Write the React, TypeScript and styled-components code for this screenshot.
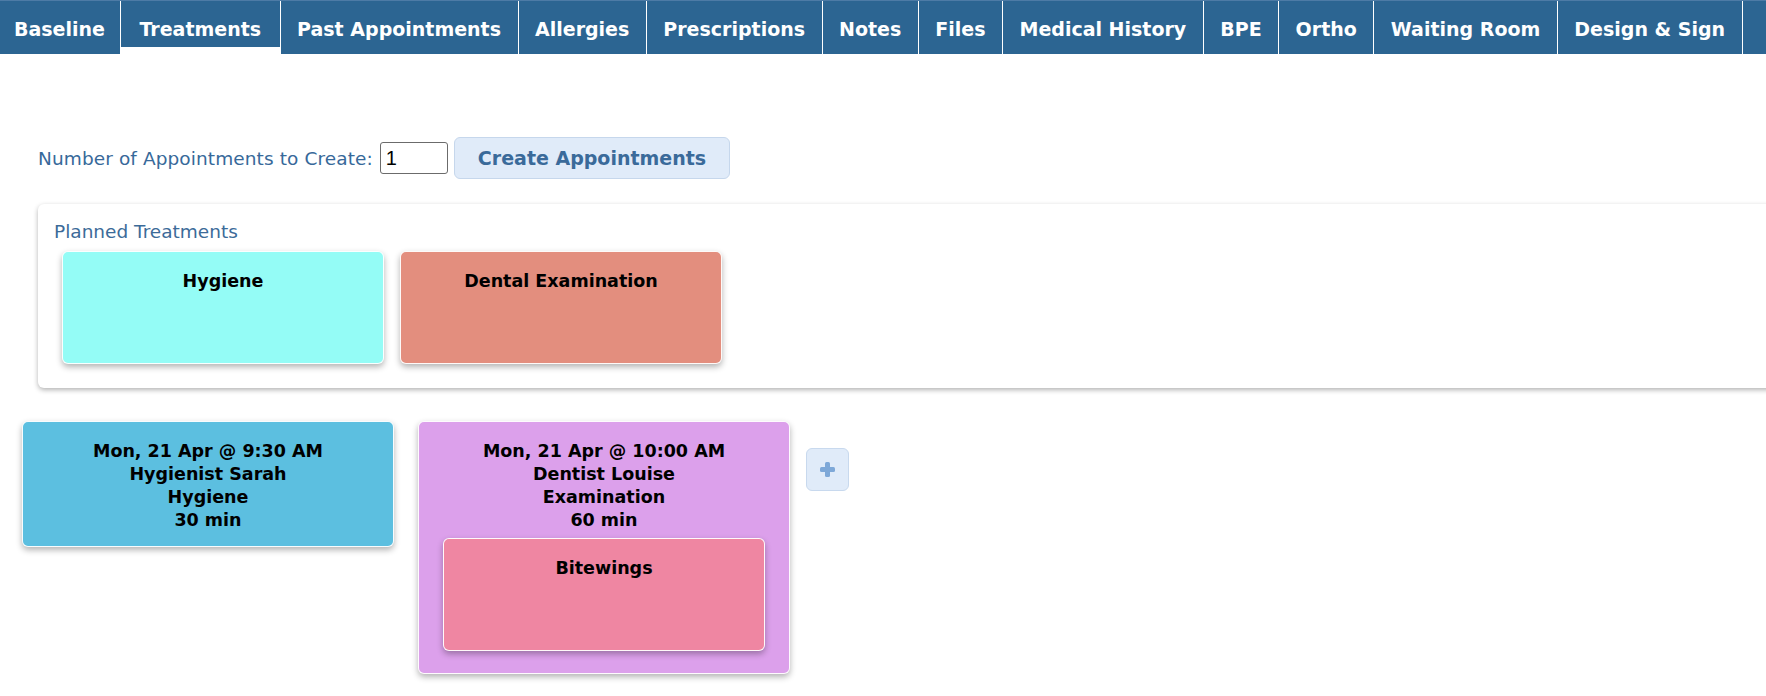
import { useState, ChangeEvent } from "react";
import styled, { createGlobalStyle, css } from "styled-components";

const GlobalStyle = createGlobalStyle`
  html, body {
    margin: 0;
    padding: 0;
    overflow: hidden;
    background: #fff;
  }

  body {
    font-family: "DejaVu Sans", "Liberation Sans", sans-serif;
  }
`;

const mixinCard = css`
  box-sizing: border-box;
  border: 1px solid rgba(255, 255, 255, 0.95);
  border-radius: 6px;
  box-shadow: 0 3px 6px rgba(0, 0, 0, 0.3);

  color: #000;
  font-size: 17.5px;
  font-weight: 700;
  line-height: 23px;
  text-align: center;
`;

const Nav = styled.nav`
  display: flex;
  height: 54px;
  box-sizing: border-box;

  background-color: #2c6592;
  border-top: 1px solid #4d7ba6;
`;

const Tab = styled.button<{ $active?: boolean }>`
  display: flex;
  align-items: center;
  box-sizing: border-box;
  height: 100%;
  padding: 3px 16.5px 0;

  color: #fff;
  font-family: inherit;
  font-size: 19px;
  font-weight: 700;
  line-height: 22px;
  white-space: nowrap;

  background: none;
  border: none;
  border-right: 1px solid #fff;
  cursor: pointer;

  &:first-child {
    padding: 3px 15px 0 14px;
  }

  ${({ $active }) =>
    $active &&
    css`
      padding: 3px 18.5px 0;
      box-shadow: inset 0 -7px 0 #fff;
    `}
`;

const Main = styled.main`
  padding: 83px 0 40px 38px;
`;

const Toolbar = styled.div`
  display: flex;
  align-items: center;
  gap: 6px;

  color: #37699a;
  font-size: 18.5px;
  letter-spacing: 0.1px;

  label {
    margin-right: 1px;
  }
`;

const CountInput = styled.input`
  box-sizing: border-box;
  width: 68px;
  height: 32px;
  padding: 0 5px;

  color: #000;
  font-family: "Liberation Sans", Arial, sans-serif;
  font-size: 20px;

  border: 1px solid #6b6b6b;
  border-radius: 3px;
  outline: none;
`;

const CreateButton = styled.button`
  box-sizing: border-box;
  height: 42px;
  padding: 0 23px;

  color: #3a6a9a;
  font-family: inherit;
  font-size: 19px;
  font-weight: 700;

  background-color: #e0ebf9;
  border: 1px solid #c6d7ec;
  border-radius: 6px;
  cursor: pointer;
`;

const Panel = styled.section`
  box-sizing: border-box;
  margin: 25px -60px 0 0;
  padding: 16px;

  background-color: #fff;
  border-radius: 6px;
  box-shadow: 0 2px 5px rgba(0, 0, 0, 0.3);
`;

const PanelTitle = styled.div`
  color: #3c6b99;
  font-size: 18.5px;
  line-height: 23px;
`;

const CardRow = styled.div`
  display: flex;
  flex-wrap: wrap;
`;

const TreatmentCard = styled.div<{ $color: string }>`
  ${mixinCard}

  width: 322px;
  height: 113px;
  margin: 8px;
  padding: 18px 16px 16px;

  background-color: ${({ $color }) => $color};
`;

const AppointmentRow = styled.div`
  display: flex;
  align-items: flex-start;
  gap: 24px;

  margin: 33px 0 0 -16px;
`;

const AppointmentCard = styled.div<{ $color: string }>`
  ${mixinCard}

  width: 372px;
  padding: 18px 16px 14px;

  background-color: ${({ $color }) => $color};

  ${TreatmentCard} {
    margin: 6px 8px 8px;
  }
`;

const AddButton = styled.button`
  display: flex;
  align-items: center;
  justify-content: center;
  box-sizing: border-box;
  width: 43px;
  height: 43px;
  margin: 27px 0 0 -8px;
  padding: 0;

  background-color: #e0ebf9;
  border: 1px solid #c8d9ee;
  border-radius: 6px;
  cursor: pointer;
`;

type Treatment = {
  name: string;
  color: string;
};

type Appointment = {
  when: string;
  clinician: string;
  kind: string;
  duration: string;
  color: string;
  treatments: Treatment[];
};

const TABS = [
  "Baseline",
  "Treatments",
  "Past Appointments",
  "Allergies",
  "Prescriptions",
  "Notes",
  "Files",
  "Medical History",
  "BPE",
  "Ortho",
  "Waiting Room",
  "Design & Sign",
];

const PLANNED: Treatment[] = [
  { name: "Hygiene", color: "#94fcf6" },
  { name: "Dental Examination", color: "#e38e7e" },
];

const APPOINTMENTS: Appointment[] = [
  {
    when: "Mon, 21 Apr @ 9:30 AM",
    clinician: "Hygienist Sarah",
    kind: "Hygiene",
    duration: "30 min",
    color: "#5cbfe0",
    treatments: [],
  },
  {
    when: "Mon, 21 Apr @ 10:00 AM",
    clinician: "Dentist Louise",
    kind: "Examination",
    duration: "60 min",
    color: "#dca0eb",
    treatments: [{ name: "Bitewings", color: "#ef86a2" }],
  },
];

function PlusIcon() {
  return (
    <svg width="15" height="15" viewBox="0 0 15 15" fill="#7ea8d8">
      <rect x="5" y="0" width="5" height="15" rx="1.5" />
      <rect x="0" y="5" width="15" height="5" rx="1.5" />
    </svg>
  );
}

function App() {
  const [activeTab, setActiveTab] = useState("Treatments");
  const [count, setCount] = useState("1");

  const onChangeCount = (e: ChangeEvent<HTMLInputElement>) => {
    setCount(e.target.value);
  };

  return (
    <>
      <GlobalStyle />

      <Nav>
        {TABS.map((tab) => (
          <Tab
            key={tab}
            $active={tab === activeTab}
            onClick={() => setActiveTab(tab)}
          >
            {tab}
          </Tab>
        ))}
      </Nav>

      <Main>
        <Toolbar>
          <label htmlFor="appointment-count">
            Number of Appointments to Create:
          </label>
          <CountInput
            id="appointment-count"
            value={count}
            onChange={onChangeCount}
          />
          <CreateButton>Create Appointments</CreateButton>
        </Toolbar>

        <Panel>
          <PanelTitle>Planned Treatments</PanelTitle>
          <CardRow>
            {PLANNED.map((t) => (
              <TreatmentCard key={t.name} $color={t.color}>
                {t.name}
              </TreatmentCard>
            ))}
          </CardRow>
        </Panel>

        <AppointmentRow>
          {APPOINTMENTS.map((a) => (
            <AppointmentCard key={a.when} $color={a.color}>
              <div>{a.when}</div>
              <div>{a.clinician}</div>
              <div>{a.kind}</div>
              <div>{a.duration}</div>
              {a.treatments.map((t) => (
                <TreatmentCard key={t.name} $color={t.color}>
                  {t.name}
                </TreatmentCard>
              ))}
            </AppointmentCard>
          ))}

          <AddButton aria-label="Add appointment">
            <PlusIcon />
          </AddButton>
        </AppointmentRow>
      </Main>
    </>
  );
}

export default App;
